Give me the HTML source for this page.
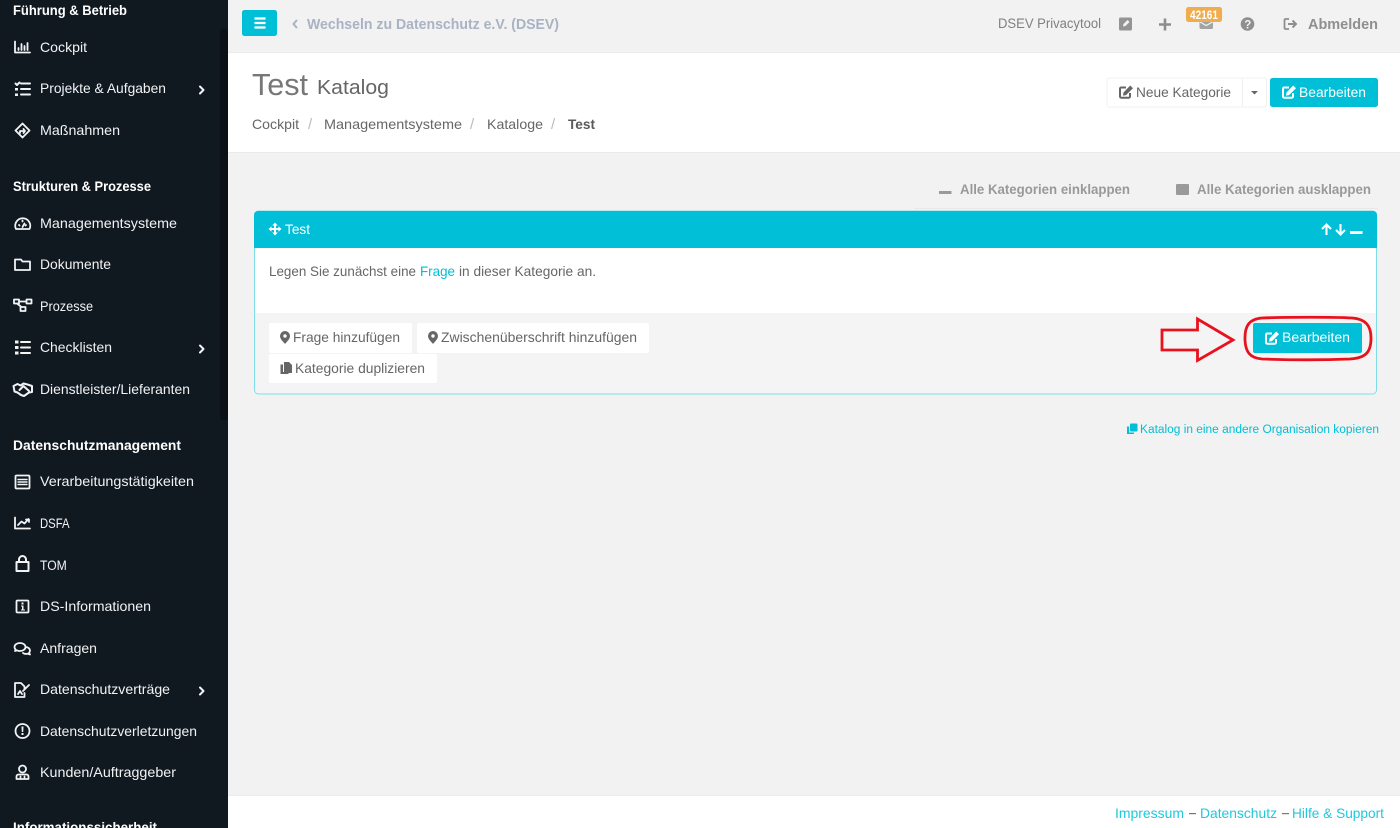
<!DOCTYPE html>
<html lang="de"><head><meta charset="utf-8"><title>Test Katalog</title>
<style>
html,body{margin:0;padding:0;width:1400px;height:828px;overflow:hidden;background:#f2f2f2}
svg{display:block;font-family:"Liberation Sans",sans-serif;filter:blur(.3px)}
.s{fill:#f1f3f4;font-size:14px}
.h{fill:#fff;font-size:14px;font-weight:bold}
.g{fill:#666;font-size:14px}
.t{fill:#00bfd6}
.i{fill:none;stroke:#f1f3f4;stroke-width:1.8;stroke-linecap:round;stroke-linejoin:round}
.f{fill:#f1f3f4}
</style></head><body>
<svg width="1400" height="828" viewBox="0 0 1400 828" xmlns="http://www.w3.org/2000/svg">
<defs>
<symbol id="edit" viewBox="0 0 14 14" overflow="visible">
<path d="M11 8v3.500a1.200 1.200 0 0 1-1.200 1.200H2.200A1.200 1.200 0 0 1 1 11.500V3.700a1.200 1.200 0 0 1 1.200-1.200H7" fill="none" stroke="currentColor" stroke-width="2"/>
<path d="M4.500 7.500 11.200.5l2.800 2.800-7 6.800-3 .5z" fill="currentColor"/>
</symbol>
<symbol id="pin" viewBox="0 0 10 13" overflow="visible">
<path d="M5 0a5 5 0 0 1 5 5c0 3-3 5.500-5 8-2-2.500-5-5-5-8a5 5 0 0 1 5-5z" fill="#666"/>
<circle cx="5" cy="5" r="1.700" fill="#fff"/>
</symbol>
</defs>

<!-- backgrounds -->
<rect width="1400" height="828" fill="#f2f2f2"/>
<rect x="228" y="52" width="1172" height="1" fill="#ebebeb"/>
<rect x="228" y="53" width="1172" height="99" fill="#fff"/>
<rect x="228" y="152" width="1172" height="1" fill="#e9e9e9"/>
<rect x="228" y="795" width="1172" height="33" fill="#fff"/>
<rect x="228" y="795" width="1172" height="1" fill="#ebebeb"/>

<!-- sidebar -->
<rect x="0" y="0" width="228" height="828" fill="#101820"/>
<rect x="220" y="29" width="8" height="391" rx="3" fill="#0a1016"/>

<text class="h" x="13" y="15" textLength="114" lengthAdjust="spacingAndGlyphs">Führung &amp; Betrieb</text>
<text class="s" x="40" y="52" textLength="47" lengthAdjust="spacingAndGlyphs">Cockpit</text>
<text class="s" x="40" y="93" textLength="126" lengthAdjust="spacingAndGlyphs">Projekte &amp; Aufgaben</text>
<text class="s" x="40" y="135" textLength="80" lengthAdjust="spacingAndGlyphs">Maßnahmen</text>
<text class="h" x="13" y="191" textLength="138" lengthAdjust="spacingAndGlyphs">Strukturen &amp; Prozesse</text>
<text class="s" x="40" y="228" textLength="137" lengthAdjust="spacingAndGlyphs">Managementsysteme</text>
<text class="s" x="40" y="269" textLength="71" lengthAdjust="spacingAndGlyphs">Dokumente</text>
<text class="s" transform="translate(40 311) scale(.91 1)">Prozesse</text>
<text class="s" x="40" y="352" textLength="72" lengthAdjust="spacingAndGlyphs">Checklisten</text>
<text class="s" x="40" y="394" textLength="150" lengthAdjust="spacingAndGlyphs">Dienstleister/Lieferanten</text>
<text class="h" x="13" y="450" textLength="168" lengthAdjust="spacingAndGlyphs">Datenschutzmanagement</text>
<text class="s" x="40" y="486" textLength="154" lengthAdjust="spacingAndGlyphs">Verarbeitungstätigkeiten</text>
<text class="s" transform="translate(40 528) scale(.81 1)">DSFA</text>
<text class="s" transform="translate(40 570) scale(.87 1)">TOM</text>
<text class="s" x="40" y="611" textLength="111" lengthAdjust="spacingAndGlyphs">DS-Informationen</text>
<text class="s" x="40" y="653" textLength="57" lengthAdjust="spacingAndGlyphs">Anfragen</text>
<text class="s" x="40" y="694" textLength="130" lengthAdjust="spacingAndGlyphs">Datenschutzverträge</text>
<text class="s" x="40" y="736" textLength="157" lengthAdjust="spacingAndGlyphs">Datenschutzverletzungen</text>
<text class="s" x="40" y="777" textLength="136" lengthAdjust="spacingAndGlyphs">Kunden/Auftraggeber</text>
<text class="h" x="13" y="832" textLength="144" lengthAdjust="spacingAndGlyphs">Informationssicherheit</text>

<!-- sidebar chevrons -->
<path class="i" style="stroke-width:2" d="M200 86.500l3.500 3.500-3.500 3.500M200 345.500l3.500 3.500-3.500 3.500M200 687.500l3.500 3.500-3.500 3.500"/>

<!-- sidebar icons -->
<path class="i" d="M15 41.500V52.500H30M18.500 48v2M21.500 44v6M24.500 46v4M27.500 43v7"/>
<path class="i" style="stroke-width:2" d="M21 83.500H30M21 89H30M21 94.500H30M15.500 83.500l1.500 1.500 2.500-2.500"/>
<path class="f" d="M15 88h3v2.500h-3zM15 93.500h3v2.500h-3z"/>
<path class="i" d="M22.500 123.500l7 7-7 7-7-7zM20 133v-2h5M23.500 129l1.500 2-1.500 2"/>
<path class="i" d="M16 229a7.500 7.500 0 1 1 13.500 0zM19 225l.5.5M22.500 220.500v1M26 225l-.5.500M22.500 227l2-3.500"/>
<path class="i" d="M15 259.500h6l1.500 2H30V270H15z"/>
<path class="i" d="M14 299.500h5v4h-5zM26.500 299.500h5v4h-5zM20.500 307h5v4h-5zM19 301.500h7.500M17 303.500l4.500 3.500"/>
<path class="i" style="stroke-width:2" d="M21 342H30M21 347.500H30M21 353H30"/>
<path class="f" d="M15 340.500h3.500v3H15zM15 346h3.500v3H15zM15 351.500h3.500v3H15z"/>
<path class="i" style="stroke-width:2" d="M13.500 386l4-2 3 1.500 3-2 4 1 4.500 1.500v6l-3 .500-5 3.500-3-1-3.500-2.500-3-1zM19.500 390l4-4 5.500 5"/>
<rect class="i" x="15.500" y="475.500" width="14" height="13" rx="1"/>
<path class="i" d="M18 479.500h9M18 482h9M18 484.500h9" style="stroke-width:1.400"/>
<path class="i" d="M15 517.500V528.500H30M18 525l3.500-3.500 3 2 4-4.500M26 519.500h3v2.500"/>
<path class="i" style="stroke-width:2" d="M16.500 562h12v9h-12zM19 562v-2.500a3.500 3.500 0 0 1 7 0V562"/>
<rect class="i" x="16.500" y="600.500" width="12" height="12" rx="1"/>
<path class="f" d="M21.500 602.500h2v2h-2zM21 605.500h2.500v4H25v1h-4v-1h1v-3h-1z"/>
<path class="i" d="M20 643c-3.300 0-5.500 1.800-5.500 4 0 1 .5 2 1.200 2.600l-.7 1.400 2-.6c1 .4 2 .6 3 .6 3.300 0 5.500-1.800 5.500-4s-2.200-4-5.500-4zM26 647c2.500.4 4 2 4 3.500 0 1-.5 1.700-1 2.300l1 1.700-2.500-.8c-1 .3-3 .3-4.500-.7"/>
<path class="i" d="M24.500 693v4H15V683h6l3.500 3.500v2.500M18 694l2-3 2 3M23 691l6-6"/>
<circle class="i" cx="22.500" cy="731" r="7"/>
<path class="f" d="M21.500 726.500h2l-.3 5.500h-1.400zM21.500 733h2v2h-2z"/>
<circle class="i" cx="22.500" cy="769" r="3.500"/>
<path class="i" d="M16.500 779v-2.500c0-1 .8-2 2-2h8c1.200 0 2 1 2 2V779zM20.500 776.500v1M24.500 776.500v1"/>

<!-- top bar -->
<rect x="242" y="10" width="35" height="26" rx="2.500" fill="#00bfd6"/>
<path d="M254.500 18.500h11M254.500 23h11M254.500 27.500h11" stroke="#fff" stroke-width="2.200"/>
<path d="M297 20l-3.500 4 3.500 4" fill="none" stroke="#a9b3c4" stroke-width="2"/>
<text x="307" y="29" font-size="15" font-weight="bold" fill="#a9b3c4" textLength="252" lengthAdjust="spacingAndGlyphs">Wechseln zu Datenschutz e.V. (DSEV)</text>
<text x="998" y="28" font-size="13.500" fill="#808080" textLength="103" lengthAdjust="spacingAndGlyphs">DSEV Privacytool</text>
<rect x="1119" y="17.500" width="13" height="13" rx="1.500" fill="#949494"/>
<path d="M1123 26.500l.5-2.500 4-4 2 2-4 4z" fill="#f2f2f2"/>
<path d="M1165 18.500v12M1159 24.500h12" stroke="#8c8c8c" stroke-width="2.600"/>
<rect x="1199.500" y="18" width="13.500" height="11" rx="1.500" fill="#a3a3a3"/>
<path d="M1200 22l6.200 3.500 6.300-3.500" fill="none" stroke="#f2f2f2" stroke-width="1.200"/>
<rect x="1186" y="7" width="36" height="15" rx="2.500" fill="#f0ad4e"/>
<text x="1190" y="19" font-size="11.500" font-weight="bold" fill="#fff" textLength="28" lengthAdjust="spacingAndGlyphs">42161</text>
<circle cx="1247.500" cy="24" r="6.800" fill="#8f8f8f"/>
<text x="1244.300" y="28.300" font-size="11.500" font-weight="bold" fill="#f2f2f2">?</text>
<path d="M1289 19h-3.500a1 1 0 0 0-1 1v8a1 1 0 0 0 1 1h3.500" fill="none" stroke="#8f8f8f" stroke-width="1.800"/>
<path d="M1288 24h7M1292.500 20.500l3.500 3.500-3.500 3.500" fill="none" stroke="#8f8f8f" stroke-width="2"/>
<text x="1308" y="29" font-size="15" font-weight="bold" fill="#8f8f8f" textLength="70" lengthAdjust="spacingAndGlyphs">Abmelden</text>

<!-- header -->
<text x="252" y="95" font-size="31" fill="#777" textLength="56" lengthAdjust="spacingAndGlyphs">Test</text>
<text x="317" y="94" font-size="20" fill="#666" textLength="72" lengthAdjust="spacingAndGlyphs">Katalog</text>
<text class="g" x="252" y="129" textLength="47" lengthAdjust="spacingAndGlyphs">Cockpit</text>
<text x="308" y="129" font-size="15" fill="#bbb">/</text>
<text class="g" x="324" y="129" textLength="138" lengthAdjust="spacingAndGlyphs">Managementsysteme</text>
<text x="470" y="129" font-size="15" fill="#bbb">/</text>
<text class="g" x="487" y="129" textLength="56" lengthAdjust="spacingAndGlyphs">Kataloge</text>
<text x="551" y="129" font-size="15" fill="#bbb">/</text>
<text x="568" y="129" font-size="14" font-weight="bold" fill="#5a5a5a" textLength="27" lengthAdjust="spacingAndGlyphs">Test</text>

<rect x="1107" y="78" width="159.500" height="29" rx="2.500" fill="#fff" stroke="#f0f0f0"/>
<rect x="1242" y="79" width="1" height="27" fill="#eee"/>
<use href="#edit" x="1119" y="85" width="14" height="14" color="#666"/>
<text class="g" x="1136" y="97" textLength="95" lengthAdjust="spacingAndGlyphs">Neue Kategorie</text>
<path d="M1251 91h7l-3.500 3.500z" fill="#666"/>
<rect x="1270" y="78" width="108" height="29" rx="2.500" fill="#00bfd6"/>
<use href="#edit" x="1282" y="85" width="14" height="14" color="#fff"/>
<text x="1299" y="97" font-size="14" fill="#fff" textLength="67" lengthAdjust="spacingAndGlyphs">Bearbeiten</text>

<!-- collapse controls -->
<rect x="939" y="191" width="12.500" height="3" fill="#9a9a9a"/>
<text x="960" y="194" font-size="13.500" font-weight="bold" fill="#999" textLength="170" lengthAdjust="spacingAndGlyphs">Alle Kategorien einklappen</text>
<rect x="1176" y="184" width="13" height="11" rx="1" fill="#9a9a9a"/>
<rect x="1177.500" y="190.500" width="10" height="1" fill="#9a9a9a"/>
<text x="1197" y="194" font-size="13.500" font-weight="bold" fill="#999" textLength="174" lengthAdjust="spacingAndGlyphs">Alle Kategorien ausklappen</text>
<rect x="914" y="208" width="464" height="1" fill="#e8e8e8"/>

<!-- panel -->
<rect x="254.500" y="211" width="1122" height="183" rx="4" fill="#f4f4f4" stroke="#7fdde8"/>
<rect x="255" y="248" width="1121" height="65" fill="#fff"/>
<path d="M254 248V215a4 4 0 0 1 4-4H1373a4 4 0 0 1 4 4V248z" fill="#00bfd6"/>
<path d="M275 222.500l2.800 3h-1.800v2.500h2.500v-1.800l3 2.800-3 2.800v-1.800H276v2.500h1.800l-2.800 3-2.800-3h1.800v-2.500h-2.500v1.800l-3-2.800 3-2.800v1.800h2.500v-2.500h-1.800z" fill="#fff"/>
<text x="285" y="234" font-size="14" fill="#fff" textLength="25" lengthAdjust="spacingAndGlyphs">Test</text>
<path d="M1326.500 235v-10M1322 229l4.500-4.500 4.500 4.500M1340.500 224v10M1336 230l4.500 4.500 4.500-4.500" fill="none" stroke="#fff" stroke-width="2.100"/>
<rect x="1350" y="231" width="12.500" height="3" fill="#fff"/>

<text class="g" x="269" y="276" textLength="147" lengthAdjust="spacingAndGlyphs">Legen Sie zunächst eine</text>
<text class="t" x="420" y="276" font-size="14" textLength="35" lengthAdjust="spacingAndGlyphs">Frage</text>
<text class="g" x="459" y="276" textLength="137" lengthAdjust="spacingAndGlyphs">in dieser Kategorie an.</text>

<rect x="269" y="323" width="143" height="30" rx="2" fill="#fff"/>
<rect x="417" y="323" width="232" height="30" rx="2" fill="#fff"/>
<rect x="269" y="354" width="168" height="29" rx="2" fill="#fff"/>
<use href="#pin" x="280" y="331" width="10" height="13"/>
<text class="g" x="293" y="342" textLength="107" lengthAdjust="spacingAndGlyphs">Frage hinzufügen</text>
<use href="#pin" x="428" y="331" width="10" height="13"/>
<text class="g" x="441" y="342" textLength="196" lengthAdjust="spacingAndGlyphs">Zwischenüberschrift hinzufügen</text>
<path d="M283 364.500h-2.500v9.500h8v-2h-5.500z" fill="#666"/>
<path d="M284 362h5l3 3v8h-8z" fill="#666"/>
<text class="g" x="295" y="373" textLength="130" lengthAdjust="spacingAndGlyphs">Kategorie duplizieren</text>

<rect x="1253" y="323" width="109" height="30" rx="2" fill="#00bfd6"/>
<use href="#edit" x="1265" y="331" width="14" height="14" color="#fff"/>
<text x="1282" y="342" font-size="14" fill="#fff" textLength="68" lengthAdjust="spacingAndGlyphs">Bearbeiten</text>

<!-- annotations -->
<path d="M1162 330H1197.500V319L1233 340 1197.500 360.500V350H1162z" fill="none" stroke="#e8121f" stroke-width="2.800"/>
<path d="M1262 318C1290 317 1335 317 1352 318 1366 319 1371 326 1371 338 1371 352 1366 358 1350 359 1325 360 1290 360 1262 359 1250 358 1245.500 352 1245 340 1244.500 326 1249 319 1262 318z" fill="none" stroke="#e8121f" stroke-width="2.800"/>

<!-- copy link -->
<path d="M1129 426.500h-2v7.500h7v-1.500h-5z" fill="#00bfd6"/>
<rect x="1130" y="423.500" width="7.500" height="8" rx="1" fill="#00bfd6"/>
<text class="t" x="1140" y="433" font-size="11.500" textLength="239" lengthAdjust="spacingAndGlyphs">Katalog in eine andere Organisation kopieren</text>

<!-- footer -->
<text class="t" x="1115" y="818" font-size="14" textLength="69" lengthAdjust="spacingAndGlyphs" style="fill:#1fc8dc">Impressum</text>
<rect x="1189" y="813" width="7" height="1.200" fill="#777"/>
<text class="t" x="1200" y="818" font-size="14" textLength="77" lengthAdjust="spacingAndGlyphs" style="fill:#1fc8dc">Datenschutz</text>
<rect x="1282" y="813" width="7" height="1.200" fill="#777"/>
<text class="t" x="1292" y="818" font-size="14" textLength="92" lengthAdjust="spacingAndGlyphs" style="fill:#1fc8dc">Hilfe &amp; Support</text>
</svg>
</body></html>
